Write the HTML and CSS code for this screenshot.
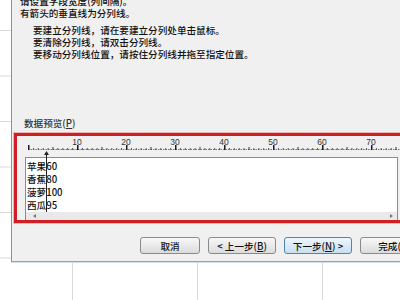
FILE: index.html
```html
<html>
  <head>
    <link rel="stylesheet" href="styles.css">
  </head>
  <body>
    <div class="sheet">
      <div class="dialog">
        <div class="intro">
          <p>请设置字段宽度(列间隔)。</p>
          <p>有箭头的垂直线为分列线。</p>
          <ul class="hints">
            <li>要建立分列线，请在要建立分列处单击鼠标。</li>
            <li>要清除分列线，请双击分列线。</li>
            <li>要移动分列线位置，请按住分列线并拖至指定位置。</li>
          </ul>
        </div>

        <div class="preview-label">数据预览(<u>P</u>)</div>
        <div class="preview">
          <div class="ruler">
            <div class="ruler-labels">
              <span>10</span><span>20</span><span>30</span><span>40</span><span>50</span><span>60</span><span>70</span>
            </div>
            <svg class="ticks" width="372" height="5">
              <defs>
                <pattern id="tick" width="49" height="5" patternUnits="userSpaceOnUse">
                  <rect x="0" y="0" width="1.5" height="5" fill="#1a1a1a"/>
                  <rect x="4.9" y="3" width="1" height="2" fill="#555"/>
                  <rect x="9.8" y="3" width="1" height="2" fill="#555"/>
                  <rect x="14.7" y="3" width="1" height="2" fill="#555"/>
                  <rect x="19.6" y="3" width="1" height="2" fill="#555"/>
                  <rect x="24.5" y="2" width="1" height="3" fill="#333"/>
                  <rect x="29.4" y="3" width="1" height="2" fill="#555"/>
                  <rect x="34.3" y="3" width="1" height="2" fill="#555"/>
                  <rect x="39.2" y="3" width="1" height="2" fill="#555"/>
                  <rect x="44.1" y="3" width="1" height="2" fill="#555"/>
                </pattern>
              </defs>
              <line x1="0" y1="4.5" x2="372" y2="4.5" stroke="#777" stroke-dasharray="1.5 1"/>
              <rect width="372" height="5" fill="url(#tick)"/>
            </svg>
          </div>
          <div class="data">
            <div>苹果60</div>
            <div>香蕉80</div>
            <div>菠萝100</div>
            <div>西瓜95</div>
          </div>
          <div class="hscroll">
            <span class="arrow-left"></span>
            <span class="arrow-right"></span>
          </div>
          <svg class="split" width="5" height="61">
            <polygon points="2.5,0 0,4 5,4" fill="#222"/>
            <rect x="2" y="4" width="1" height="57" fill="#222"/>
          </svg>
        </div>

        <div class="buttons">
          <button class="btn btn-cancel">取消</button>
          <button class="btn">&lt; 上一步(<u>B</u>)</button>
          <button class="btn btn-default">下一步(<u>N</u>) &gt;</button>
          <button class="btn">完成(<u>F</u>)</button>
        </div>
      </div>
    </div>
  </body>
</html>
```

FILE: styles.css
```css
*{
  box-sizing: border-box;
}
body{
  margin: 0;
}
.sheet{
  width: 400px;
  height: 300px;
  overflow: hidden;
  background-color: #fff;
  background-image:
    linear-gradient(to right, #d9d9d9 1px, transparent 1px),
    linear-gradient(to bottom, #d9d9d9 1px, transparent 1px);
  background-size: 125px 100%, 100% 45.5px;
  background-position: 72px 0, 0 30px;
  font: 500 9.6px "Noto Sans CJK SC", sans-serif;
  color: #111;
}
.dialog{
  display: flow-root;
  margin-left: 11px;
  width: 430px;
  height: 262px;
  background: #f0f0f0;
  border-left: 1px solid #8f8f8f;
  border-bottom: 1px solid #9aa3ad;
  box-shadow: 0 1px 0 #d5dfe9;
}
.intro{
  margin: -5px 0 0 8px;
  line-height: 12px;
}
.intro p{
  margin: 0;
}
.hints{
  list-style: none;
  margin: 5px 0 0 0;
  padding: 0 0 0 13px;
}
.preview-label{
  margin: 57px 0 0 12px;
  line-height: 12px;
  color: #333;
}
.preview{
  position: relative;
  margin: 4px 0 0 2px;
  border: 3px solid #cf1f25;
  box-shadow: 0 0 0 1px rgba(225, 110, 110, 0.45);
}
.ruler{
  height: 21px;
  padding: 1px 0 0 11px;
}
.ruler-labels{
  display: flex;
  padding-left: 24.5px;
  height: 8px;
  line-height: 8px;
  font: 8.5px "Liberation Sans", sans-serif;
  color: #333;
}
.ruler-labels span{
  flex: none;
  width: 49px;
  text-align: center;
}
.ticks{
  display: block;
}
.data{
  margin-left: 8px;
  width: 373px;
  height: 55px;
  padding: 2px 0 0 1px;
  background: #fff;
  border: 1px solid #8c8c8c;
  border-bottom: 0;
  line-height: 13px;
}
.hscroll{
  display: flex;
  justify-content: space-between;
  align-items: center;
  margin-left: 8px;
  width: 373px;
  height: 8px;
  padding: 0 4px 0 7px;
  background: #e9e9e9;
  border-left: 1px solid #8c8c8c;
  border-right: 1px solid #8c8c8c;
}
.arrow-left{
  border-right: 3px solid #777;
  border-top: 2px solid transparent;
  border-bottom: 2px solid transparent;
}
.arrow-right{
  border-left: 3px solid #777;
  border-top: 2px solid transparent;
  border-bottom: 2px solid transparent;
}
.split{
  position: absolute;
  left: 27px;
  top: 15px;
}
.buttons{
  display: flex;
  gap: 8px;
  margin: 14px 0 0 128px;
}
.btn{
  flex: none;
  width: 68px;
  height: 17px;
  padding: 0;
  line-height: 15px;
  font: inherit;
  color: #111;
  text-align: center;
  border: 1px solid #8a8a8a;
  border-radius: 3px;
  background: linear-gradient(#f7f7f7, #dcdcdc);
}
.btn-cancel{
  width: 60px;
}
.btn-default{
  border-color: #4b86b5;
  background: linear-gradient(#eef6fc, #c8dff0);
}
```
